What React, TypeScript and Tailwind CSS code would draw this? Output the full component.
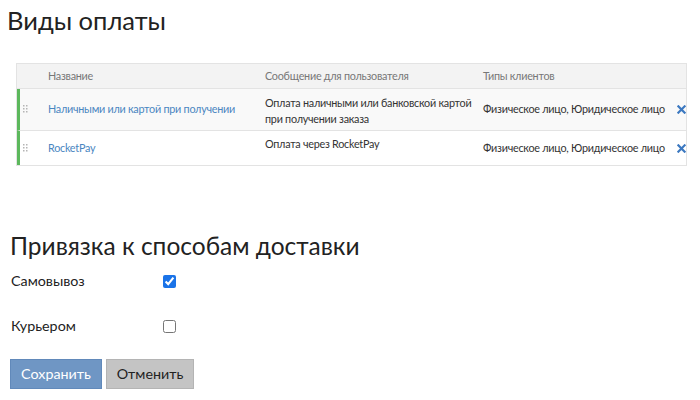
import React from "react";

const ROWS = [
  {
    id: 1,
    name: "Наличными или картой при получении",
    message: "Оплата наличными или банковской картой при получении заказа",
    types: "Физическое лицо, Юридическое лицо",
    bg: "bg-[#f9f9f9]",
    h: "h-[42px]",
  },
  {
    id: 2,
    name: "RocketPay",
    message: "Оплата через RocketPay",
    types: "Физическое лицо, Юридическое лицо",
    bg: "bg-white",
    h: "h-[34px]",
  },
];

function DragHandle() {
  return (
    <svg width="5" height="9" viewBox="0 0 5 9" className="text-[#b5b5b5]">
      {[0, 3, 6].map((y) => (
        <g key={y} fill="currentColor">
          <rect x="0" y={y} width="1.5" height="1.5" />
          <rect x="3" y={y} width="1.5" height="1.5" />
        </g>
      ))}
    </svg>
  );
}

function Cross() {
  return (
    <svg width="9" height="9" viewBox="0 0 10 10">
      <path d="M1.5 1.5 8.5 8.5M8.5 1.5 1.5 8.5" stroke="#3b78c0" strokeWidth="2.4" strokeLinecap="square" />
    </svg>
  );
}

export default function App() {
  return (
    <div className="w-[700px] h-[400px] bg-white text-[#333] font-['Lato','Noto_Sans',sans-serif] overflow-hidden">
      <h1 className="pl-[7px] pt-[2px] text-[25.5px] leading-[36px] text-[#222]">Виды оплаты</h1>

      {/* Payment methods table */}
      <div className="ml-[16px] mt-[25px] w-[671px] border border-[#e3e3e3] text-[10.8px] tracking-[-0.25px]">
        <div className="grid grid-cols-[31px_217px_218px_minmax(0,1fr)_18px] h-[25px] items-center bg-[#f3f3f3] text-[#777] border-b border-[#e3e3e3]">
          <div />
          <div>Название</div>
          <div>Сообщение для пользователя</div>
          <div>Типы клиентов</div>
          <div />
        </div>
        {ROWS.map((row, i) => (
          <div
            key={row.id}
            className={`grid grid-cols-[28px_217px_218px_minmax(0,1fr)_18px] ${row.h} ${row.bg} border-l-[3px] border-[#5cb85c] ${
              i === 0 ? "border-b border-b-[#e3e3e3]" : ""
            }`}
          >
            <div className="flex items-center pl-[3px]">
              <DragHandle />
            </div>
            <div className="flex items-center text-[#4a86c1]">{row.name}</div>
            <div className={`leading-[16px] ${i === 0 ? "pt-[6px]" : "pt-[5px]"}`}>{row.message}</div>
            <div className="flex items-center whitespace-nowrap">{row.types}</div>
            <div className="flex items-center pl-[9px]">
              <Cross />
            </div>
          </div>
        ))}
      </div>

      {/* Delivery binding */}
      <h2 className="pl-[10px] mt-[65px] text-[24.5px] leading-[30px] text-[#222]">Привязка к способам доставки</h2>
      <div className="pl-[11px] text-[14.3px] text-[#222]">
        <div className="flex items-center h-[26px] mt-[7px]">
          <span className="w-[152px]">Самовывоз</span>
          <input type="checkbox" defaultChecked className="w-[13px] h-[13px] accent-[#1a73e8]" />
        </div>
        <div className="flex items-center h-[26px] mt-[19px]">
          <span className="w-[152px]">Курьером</span>
          <input type="checkbox" className="w-[13px] h-[13px]" />
        </div>
      </div>
      <div className="flex gap-[4px] pl-[10px] mt-[20px]">
        <button className="w-[92px] h-[30px] bg-[#6f96c4] border border-[#6189ba] text-white text-[14.3px]">Сохранить</button>
        <button className="w-[88px] h-[30px] bg-[#c4c4c4] border border-[#b4b4b4] text-[#222] text-[14.3px]">Отменить</button>
      </div>
    </div>
  );
}
